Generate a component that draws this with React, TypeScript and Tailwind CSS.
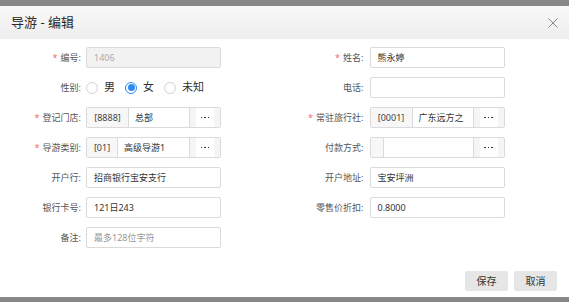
import React from 'react';

const font = { fontFamily: '"Noto Sans", "Noto Sans CJK SC", sans-serif' };

function Label({ text, required, w }: { text: string; required?: boolean; w: string }) {
  return (
    <div className={`${w} shrink-0 text-right text-[9px] text-[#555] leading-[21px] whitespace-nowrap`}>
      {required && <span className="text-[#f26b6b] mr-[3px]">*</span>}
      {text}:
    </div>
  );
}

function TextBox({ value, placeholder, disabled }: { value?: string; placeholder?: string; disabled?: boolean }) {
  return (
    <div
      className={`w-[135px] h-[21px] border border-[#dadada] rounded-[2px] px-[7px] text-[9px] leading-[19px] ${
        disabled ? 'bg-[#f2f2f2] text-[#aaa]' : 'bg-white text-[#333]'
      }`}
    >
      {value ?? <span className="text-[#999]">{placeholder}</span>}
    </div>
  );
}

function Picker({ code, name, codeW }: { code: string; name: string; codeW: string }) {
  return (
    <div className="w-[135px] h-[21px] border border-[#dadada] rounded-[2px] flex text-[9px] leading-[19px] text-[#333] overflow-hidden">
      <div className={`${codeW} shrink-0 bg-[#f7f7f7] border-r border-[#dadada] text-center text-[#444]`}>{code}</div>
      <div className="flex-1 px-[6px] bg-white whitespace-nowrap overflow-hidden">{name}</div>
      <div className="w-[31px] shrink-0 border-l border-[#dadada] bg-[#f5f5f5] flex">
        <div className="ml-[6px] w-[18px] bg-white flex items-center justify-center gap-[2px]">
          <span className="w-[1.5px] h-[1.5px] bg-[#333]" />
          <span className="w-[1.5px] h-[1.5px] bg-[#333]" />
          <span className="w-[1.5px] h-[1.5px] bg-[#333]" />
        </div>
      </div>
    </div>
  );
}

function Radio({ label, checked }: { label: string; checked?: boolean }) {
  return (
    <div className="flex items-center gap-[6px] mr-[10px]">
      <div
        className={`w-[12px] h-[12px] rounded-full border flex items-center justify-center ${
          checked ? 'border-[#2d8cf0]' : 'border-[#d3d3d3]'
        }`}
      >
        {checked && <div className="w-[7px] h-[7px] rounded-full bg-[#2d8cf0]" />}
      </div>
      <span className="text-[11px] text-[#333]">{label}</span>
    </div>
  );
}

function Left({ label, required, children }: { label: string; required?: boolean; children: React.ReactNode }) {
  return (
    <div className="flex items-center">
      <Label text={label} required={required} w="w-[81px]" />
      <div className="ml-[5px]">{children}</div>
    </div>
  );
}

function Right({ label, required, children }: { label: string; required?: boolean; children?: React.ReactNode }) {
  return (
    <div className="flex items-center">
      <Label text={label} required={required} w="w-[79px]" />
      <div className="ml-[6px]">{children}</div>
    </div>
  );
}

export default function App() {
  return (
    <div className="w-[569px] h-[302px] bg-[#888] flex flex-col" style={font}>
      <div className="h-[6px] shrink-0" />
      <div className="flex-1 bg-white flex flex-col">
        {/* Header */}
        <div className="h-[33px] shrink-0 bg-gradient-to-b from-[#f9f9f9] to-[#ededed] flex items-center justify-between pl-[11px] pr-[11px]">
          <span className="text-[13px] text-[#2a2a2a]">导游 - 编辑</span>
          <svg width="10" height="10" viewBox="0 0 10 10" className="mt-[1px]">
            <path d="M0.5 0.5 L9.5 9.5 M9.5 0.5 L0.5 9.5" stroke="#8a8a8a" strokeWidth="1" />
          </svg>
        </div>

        {/* Form */}
        <div className="grid grid-cols-2 gap-y-[9px] pt-[8px]">
          <Left label="编号" required>
            <TextBox value="1406" disabled />
          </Left>
          <Right label="姓名" required>
            <TextBox value="熊永婷" />
          </Right>

          <Left label="性别">
            <div className="h-[21px] flex items-center">
              <Radio label="男" />
              <Radio label="女" checked />
              <Radio label="未知" />
            </div>
          </Left>
          <Right label="电话">
            <TextBox value="" />
          </Right>

          <Left label="登记门店" required>
            <Picker code="[8888]" name="总部" codeW="w-[42px]" />
          </Left>
          <Right label="常驻旅行社" required>
            <Picker code="[0001]" name="广东远方之" codeW="w-[42px]" />
          </Right>

          <Left label="导游类别" required>
            <Picker code="[01]" name="高级导游1" codeW="w-[31px]" />
          </Left>
          <Right label="付款方式">
            <Picker code="" name="" codeW="w-[13px]" />
          </Right>

          <Left label="开户行">
            <TextBox value="招商银行宝安支行" />
          </Left>
          <Right label="开户地址">
            <TextBox value="宝安坪洲" />
          </Right>

          <Left label="银行卡号">
            <TextBox value="121日243" />
          </Left>
          <Right label="零售价折扣">
            <TextBox value="0.8000" />
          </Right>

          <Left label="备注">
            <TextBox placeholder="最多128位字符" />
          </Left>
          <div />
        </div>

        {/* Footer */}
        <div className="mt-auto mb-[6px] flex justify-end gap-[6px] pr-[12px]">
          <button className="w-[43px] h-[20px] bg-[#e6e6e6] rounded-[2px] text-[10px] text-[#333]">保存</button>
          <button className="w-[43px] h-[20px] bg-[#e6e6e6] rounded-[2px] text-[10px] text-[#333]">取消</button>
        </div>
      </div>
      <div className="h-[5px] shrink-0" />
    </div>
  );
}
